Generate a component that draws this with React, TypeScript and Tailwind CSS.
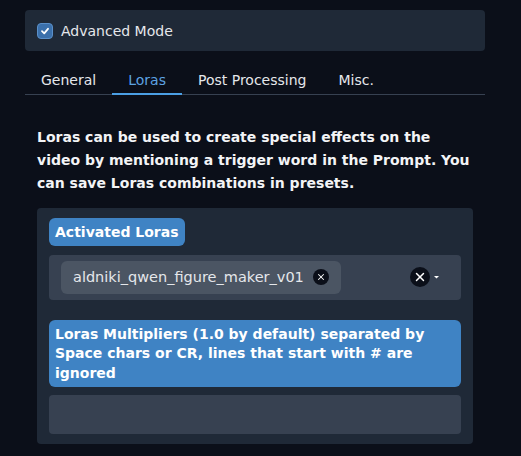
import { X } from "lucide-react";

const tabs = ["General", "Loras", "Post Processing", "Misc."];

const App = () => {
  return (
    <div className="w-[521px] h-[456px] overflow-hidden bg-[#0b0f19] px-[25px] pt-[10px] font-['DejaVu_Sans',sans-serif] text-[14px] text-[#e5e7eb]">
      <div className="w-[460px]">
        {/* advanced mode */}
        <div className="flex h-[41px] items-center gap-[8px] rounded-[4px] bg-[#1f2937] px-[12px]">
          <span className="flex h-[16px] w-[16px] items-center justify-center rounded-[4px] border border-[#5a8fc8] bg-[#3b70ab]">
            <svg width="10" height="10" viewBox="0 0 10 10">
              <path d="M2 5.2 L4.2 7.3 L8 2.8" fill="none" stroke="white" strokeWidth="1.8" strokeLinecap="round" strokeLinejoin="round" />
            </svg>
          </span>
          <span className="pt-[2px]">Advanced Mode</span>
        </div>

        {/* tabs */}
        <div className="mt-[13px] flex border-b border-[#374151]">
          {tabs.map((t) => (
            <button
              key={t}
              className={
                t === "Loras"
                  ? "-mb-px flex h-[31px] items-center border-b-2 border-[#4b9fe4] px-[16px] pt-[4px] text-[#5da3e2]"
                  : "-mb-px flex h-[31px] items-center border-b-2 border-transparent px-[16px] pt-[4px] text-[#e5e7eb]"
              }
            >
              {t}
            </button>
          ))}
        </div>

        <div className="px-[12px]">
          <p className="mt-[31px] font-bold leading-[23px] text-[#f3f4f6]">
            Loras can be used to create special effects on the video by mentioning a trigger word in the Prompt. You can save Loras combinations in presets.
          </p>

          {/* loras group */}
          <div className="mt-[13px] flex flex-col rounded-[4px] bg-[#1f2937] px-[12px] pt-[10px] pb-[10px]">
            <div className="self-start rounded-[6px] bg-[#3f83c4] px-[6px] pt-[5px] pb-[3px] font-bold leading-[19.6px] text-white">
              Activated Loras
            </div>
            <div className="mt-[9px] flex h-[45px] items-center rounded-[4px] bg-[#374151] pl-[12px] pr-[22px]">
              <div className="flex h-[33px] items-center gap-[9px] rounded-[6px] bg-[#4b5563] px-[12px]">
                <span className="pt-[1px] text-[14.5px] text-[#e5e7eb]">aldniki_qwen_figure_maker_v01</span>
                <span className="flex h-[16px] w-[16px] items-center justify-center rounded-full bg-[#0b0f19]">
                  <X size={10} strokeWidth={2.5} className="text-white" />
                </span>
              </div>
              <div className="ml-auto flex items-center gap-[4px]">
                <span className="flex h-[20px] w-[20px] items-center justify-center rounded-full bg-[#0b0f19]">
                  <X size={14} strokeWidth={2.5} className="text-white" />
                </span>
                <svg width="5" height="4" viewBox="0 0 5 4">
                  <path d="M0 1 L5 1 L2.5 3.5 Z" fill="white" />
                </svg>
              </div>
            </div>

            <div className="mt-[20px] rounded-[6px] bg-[#3f83c4] px-[6px] pt-[5px] pb-[4px] font-bold leading-[19.6px] text-white">
              Loras Multipliers (1.0 by default) separated by Space chars or CR, lines that start with # are ignored
            </div>
            <div className="mt-[8px] h-[39px] rounded-[4px] bg-[#374151]" />
          </div>
        </div>
      </div>
    </div>
  );
};

export default App;
